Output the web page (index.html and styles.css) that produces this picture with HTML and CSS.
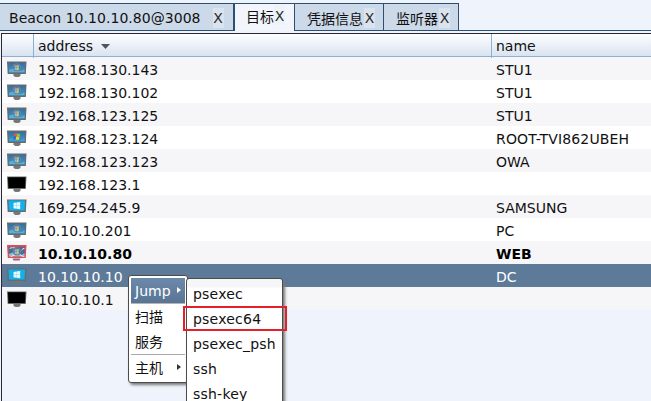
FILE: index.html
```html
<!DOCTYPE html>
<html lang="zh-CN">
<head>
<meta charset="utf-8">
<title>Targets</title>
<link rel="stylesheet" href="styles.css">
</head>
<body>
<svg class="defs" width="0" height="0">
  <defs>
    <linearGradient id="sky" x1="0" y1="0" x2="0" y2="1"><stop offset="0" stop-color="#386e9d"/><stop offset="1" stop-color="#3b98cb"/></linearGradient>
    <g id="frame"><path d="M6.500 13h7v2l-2 1h-3l-2-1z" fill="#777"/><path d="M0 0.500h19.500l-.7 12.500H.7z" fill="#666b70"/></g>
    <g id="orb"><circle cx="9.700" cy="6.500" r="4" fill="#7393a9"/><circle cx="9.700" cy="6.500" r="3.200" fill="#3f6f98"/><path d="M7.500 4.500l2.200-.5v2.500H7.500z" fill="#dc9b78"/><path d="M9.700 4l2.300.5v2H9.700z" fill="#a9c592"/><path d="M7.500 6.500h2.200v3l-2.200-.7z" fill="#7fc0ec"/><path d="M9.700 6.500H12L11.600 9l-1.900.5z" fill="#dfc77c"/></g>
    <symbol id="win7" viewBox="0 0 20 16"><use href="#frame"/><path d="M1.500 1.800H18l-.5 9.500H2z" fill="url(#sky)"/><path d="M2 9q5-3 8 0t7.500-1v3.300H2z" fill="#51b3dc"/><use href="#orb"/></symbol>
    <symbol id="winxp" viewBox="0 0 20 16"><use href="#frame"/><path d="M1.500 1.800H18l-.5 9.500H2z" fill="url(#sky)"/><path d="M2 9q5-3 8 0t7.500-1v3.300H2z" fill="#3fa1d0"/><path d="M7.300 3.500l2.700-.4-.6 3.200-2.700.3z" fill="#ed542f"/><path d="M10 3.500l3.200.4-.7 3-3-.4z" fill="#91c63b"/><path d="M6.600 6.600l2.700-.2-.6 3.100-2.700.2z" fill="#276ddb"/><path d="M9.300 6.500l3.100.5-.8 3-2.900-.4z" fill="#fbd02d"/></symbol>
    <symbol id="win8" viewBox="0 0 20 16"><use href="#frame"/><path d="M1.500 1.500H18l-.4 10H2z" fill="#10b2ee"/><path d="M6.500 4l2.900-.4v2.900H6.500zM9.600 3.500l3.600-.5v3.500H9.600zM6.500 6.800h2.900v2.900l-2.900-.4zM9.600 6.800h3.600v3.500l-3.600-.5z" fill="#e9faff"/></symbol>
    <symbol id="unknown" viewBox="0 0 20 16"><use href="#frame"/><path d="M1 1.300h17.500l-.4 10.800H1.400z" fill="#000"/></symbol>
    <symbol id="owned" viewBox="0 0 20 16"><path d="M5.500 13.500h8l-1 2h-6z" fill="#b35b61"/><path d="M0 0h19.500l-.8 13H.8z" fill="#e64a52"/><path d="M1.500 1.700H18l-.5 9.800H2z" fill="#427099"/><path d="M2 9q5-3 8 0t7.500-1v3.500H2z" fill="#90bdd9"/><path d="M2 4l2-2 3 2-2-2h4L6 3zM18 3l-4 3 2-3zM3 12l4-3 2 1-5 2zM16 12l-4-2 1-1 5 3z" fill="#f4d9e0"/><use href="#orb"/></symbol>
  </defs>
</svg>
<div class="app">
  <nav class="tabs">
    <div class="tab beacon"><span class="title">Beacon 10.10.10.80@3008</span><span class="close">X</span></div>
    <div class="tab active"><span class="cjk">目标</span><span class="close">X</span></div>
    <div class="tab creds"><span class="cjk">凭据信息</span><span class="close">X</span></div>
    <div class="tab listeners"><span class="cjk">监听器</span><span class="close">X</span></div>
  </nav>
  <main class="table">
    <div class="row head"><span class="icon"></span><span class="address">address<svg class="sort" width="9" height="5" viewBox="0 0 9 5"><path d="M0 0h9L4.500 5z"/></svg></span><span class="name">name</span></div>
    <div class="row"><span class="icon"><svg><use href="#win7"/></svg></span><span class="address">192.168.130.143</span><span class="name">STU1</span></div>
    <div class="row"><span class="icon"><svg><use href="#win7"/></svg></span><span class="address">192.168.130.102</span><span class="name">STU1</span></div>
    <div class="row"><span class="icon"><svg><use href="#win7"/></svg></span><span class="address">192.168.123.125</span><span class="name">STU1</span></div>
    <div class="row"><span class="icon"><svg><use href="#winxp"/></svg></span><span class="address">192.168.123.124</span><span class="name root">ROOT-TVI862UBEH</span></div>
    <div class="row"><span class="icon"><svg><use href="#win7"/></svg></span><span class="address">192.168.123.123</span><span class="name">OWA</span></div>
    <div class="row"><span class="icon"><svg><use href="#unknown"/></svg></span><span class="address">192.168.123.1</span><span class="name"></span></div>
    <div class="row"><span class="icon"><svg><use href="#win8"/></svg></span><span class="address">169.254.245.9</span><span class="name">SAMSUNG</span></div>
    <div class="row"><span class="icon"><svg><use href="#win7"/></svg></span><span class="address">10.10.10.201</span><span class="name">PC</span></div>
    <div class="row bold"><span class="icon"><svg><use href="#owned"/></svg></span><span class="address">10.10.10.80</span><span class="name">WEB</span></div>
    <div class="row selected"><span class="icon"><svg><use href="#win8"/></svg></span><span class="address">10.10.10.10</span><span class="name">DC</span></div>
    <div class="row"><span class="icon"><svg><use href="#unknown"/></svg></span><span class="address">10.10.10.1</span><span class="name"></span></div>
  </main>
</div>
<div class="menu context">
  <div class="item hot"><span>Jump</span><i class="arrow"></i></div>
  <div class="item cjk">扫描</div>
  <div class="item cjk">服务</div>
  <div class="item cjk last"><span>主机</span><i class="arrow"></i></div>
</div>
<div class="menu submenu">
  <div class="item">psexec</div>
  <div class="item">psexec64</div>
  <div class="item">psexec_psh</div>
  <div class="item">ssh</div>
  <div class="item">ssh-key</div>
</div>
<div class="highlight"></div>
</body>
</html>
```
FILE: styles.css
```css
* { box-sizing: border-box; }
body {
  margin: 0;
  width: 651px;
  height: 401px;
  overflow: hidden;
  position: relative;
  background: #eff3fb;
  color: #111;
  font: 14px/23px "DejaVu Sans", "Noto Sans CJK SC", sans-serif;
}
.defs { position: absolute; }
.app { display: flex; flex-direction: column; height: 401px; }
.tabs { display: flex; height: 33px; padding-top: 3px; background: linear-gradient(#eff3fb 30px, #2c5070 30px, #2c5070 31px, #eff3fb 31px); }
.tab {
  display: flex;
  height: 28px;
  padding-top: 3px;
  border: 1px solid #2c5070;
  border-left: 0;
  background: #cbd9e9;
  white-space: nowrap;
}
.beacon { width: 235px; padding-left: 9px; border-right-width: 2px; }
.beacon .title { letter-spacing: .04px; }
.beacon .close { margin-left: 12px; }
.active { width: 60px; padding: 1px 0 0 11px; border-bottom: 0; background: #f2f5fc; }
.creds { width: 89px; padding-left: 12px; }
.creds .close, .listeners .close { margin-left: 1px; }
.listeners { width: 75px; padding-left: 12px; }
.cjk { font-family: "Noto Sans CJK SC", sans-serif; }
.close { width: 11px; text-align: center; color: #2b2b2b; background: rgba(232, 239, 246, .5); height: 20px; margin-top: 1px; line-height: 21px; }
.active .close { margin-top: 0; line-height: 22px; }
.table { flex: 1; border-top: 1px solid #292933; border-left: 1px solid #292933; margin-left: 1px; }
.row { display: grid; grid-template-columns: 31px 458px 1fr; height: 23px; background: #fff; white-space: nowrap; }
.row:nth-child(even) { background: #f6f6f9; }
.row > span { padding-left: 5px; padding-top: 2px; }
.row.head { background: linear-gradient(#fdfeff, #d9e3f0); border-bottom: 1px solid #8cafd4; }
.head > span + span { border-left: 1px solid #8cafd4; padding-top: 1px; }
.row.head > .address, .row.head > .name { padding-left: 4px; }
.row svg { display: block; width: 20px; height: 16px; margin-top: 2px; }
.row .sort { display: inline-block; width: 9px; height: 5px; margin: 0 0 2px 8px; fill: #4e5459; }
.root { letter-spacing: .15px; }
.bold { font-weight: bold; color: #000; }
.row.selected { background: #5e7a99; color: #fff; }
.menu { position: absolute; background: #fff; border: 1px solid #4c4c4c; border-radius: 3px; box-shadow: 2px 2px 3px #777; }
.context { left: 128px; top: 275px; width: 60px; height: 108px; padding: 2px; }
.context .item { position: relative; height: 25px; line-height: 25px; padding-left: 4px; }
.context .hot { height: 26px; line-height: 27px; background: linear-gradient(#6d89aa, #587595); color: #fff; border-bottom: 1px solid #b5b5b5; }
.context .last { height: 27px; border-top: 1px solid #aaa; }
.arrow { position: absolute; left: 46px; top: 9px; border: 3px solid transparent; border-left: 4px solid #333; border-right: 0; }
.hot .arrow { border-left-color: #fff; }
.submenu { left: 186px; top: 278px; width: 97px; height: 140px; padding: 3px 0 0 6px; background: linear-gradient(#f5f6f8 8px, #fff 9px); }
.submenu .item { height: 25px; line-height: 25px; letter-spacing: .22px; }
.highlight { position: absolute; left: 183px; top: 306px; width: 104px; height: 25px; border: 2px solid #e6202a; }
```
